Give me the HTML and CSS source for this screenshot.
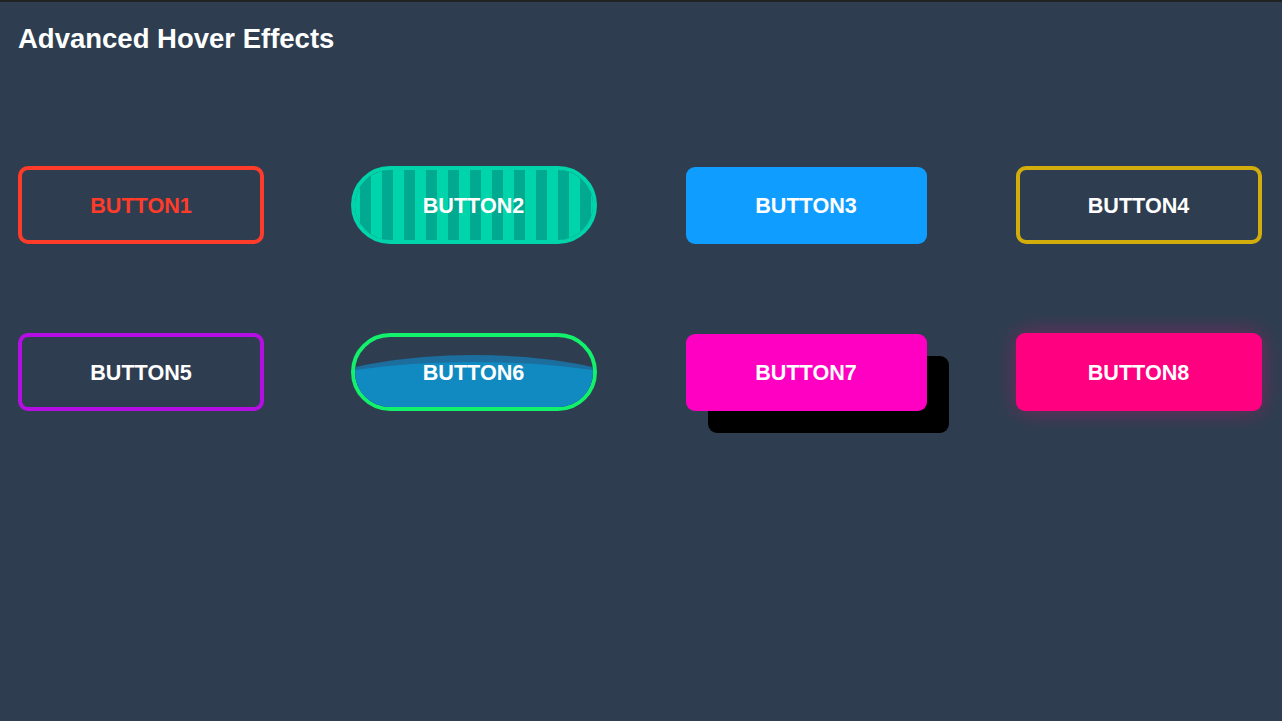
FILE: index.html
```html
<!DOCTYPE html>
<html lang="en">
<head>
<meta charset="utf-8">
<title>Advanced Hover Effects</title>
<link rel="stylesheet" href="styles.css">
</head>
<body>
<main class="page">
  <h1 class="title">Advanced Hover Effects</h1>
  <div class="grid">
    <button class="btn btn1">BUTTON1</button>
    <button class="btn btn2"><span class="label">BUTTON2</span></button>
    <button class="btn btn3">BUTTON3</button>
    <button class="btn btn4">BUTTON4</button>
    <button class="btn btn5">BUTTON5</button>
    <button class="btn btn6">
      <span class="wave wave-back"></span>
      <span class="wave wave-front"></span>
      <span class="label">BUTTON6</span>
    </button>
    <button class="btn btn7">BUTTON7</button>
    <button class="btn btn8">BUTTON8</button>
  </div>
</main>
</body>
</html>
```
FILE: styles.css
```css
html, body {
  margin: 0;
  padding: 0;
  height: 100%;
}

body {
  background: #2e3e50;
  border-top: 2px solid #202224;
  box-sizing: border-box;
  font-family: "Liberation Sans", Arial, sans-serif;
  color: #ffffff;
}

.page {
  padding: 21px 18px 0 18px;
}

.title {
  margin: 0;
  font-size: 27.5px;
  line-height: 32px;
  font-weight: bold;
  color: #ffffff;
}

.grid {
  margin-top: 111px;
  display: grid;
  grid-template-columns: repeat(4, 246px);
  grid-auto-rows: 78px;
  column-gap: 86.5px;
  row-gap: 89px;
}

.btn {
  position: relative;
  width: 246px;
  height: 78px;
  box-sizing: border-box;
  display: flex;
  align-items: center;
  justify-content: center;
  padding: 1px 0 0 0;
  margin: 0;
  font-family: "Liberation Sans", Arial, sans-serif;
  font-size: 21.6px;
  font-weight: bold;
  color: #ffffff;
  background: transparent;
  border: 4px solid transparent;
  border-radius: 10px;
  overflow: hidden;
  cursor: pointer;
}

.label {
  position: relative;
  z-index: 2;
}

.btn1 {
  border-color: #ff3b2a;
  color: #ff3b2a;
}

.btn2 {
  border-radius: 39px;
  border-color: #00d4aa;
  background: repeating-linear-gradient(90deg, #00d4aa 0 5px, #00a98f 5px 16px, #00d4aa 16px 22px);
  background-clip: padding-box;
  background-color: #00d4aa;
}

.btn3 {
  width: 241px;
  height: 77px;
  justify-self: center;
  align-self: end;
  border: none;
  background: #0f9dff;
  border-radius: 9px;
}

.btn4 {
  border-color: #d3ad0b;
}

.btn5 {
  border-color: #b50ee2;
}

.btn6 {
  border-radius: 39px;
  border-color: #12f06c;
}

.wave {
  position: absolute;
  left: 50%;
  border-radius: 50%;
}

.wave-back {
  width: 520px;
  height: 220px;
  margin-left: -260px;
  top: 18px;
  background: #1b6e9d;
  z-index: 0;
}

.wave-front {
  width: 640px;
  height: 220px;
  margin-left: -320px;
  top: 25px;
  background: #108ac0;
  z-index: 1;
}

.btn7 {
  width: 241px;
  height: 77px;
  justify-self: center;
  align-self: end;
  border: none;
  border-radius: 9px;
  background: #ff00c3;
  box-shadow: 22px 22px 0 #000000;
  overflow: visible;
}

.btn8 {
  border: none;
  border-radius: 9px;
  background: #ff0080;
  box-shadow: 0 0 22px rgba(255, 0, 128, 0.35);
  overflow: visible;
}
```
